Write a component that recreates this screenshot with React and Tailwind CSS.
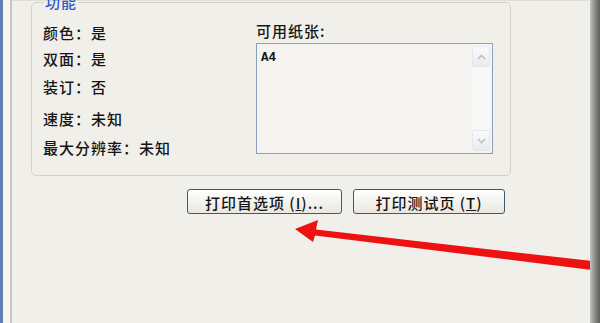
import React from "react";

const cjk = { fontFamily: '"Noto Sans CJK SC", "Noto Sans", sans-serif' };

function InfoRow({ label, value, h }) {
  return (
    <div className={`flex items-center ${h}`}>
      <span>{label}：</span>
      <span>{value}</span>
    </div>
  );
}

function ScrollBtn({ up }) {
  return (
    <div className="w-[18px] h-[21px] rounded-[2px] border border-[#e3e7ef] bg-gradient-to-b from-[#fbfbf9] to-[#e8ebee] flex items-center justify-center">
      <svg width="9" height="6" viewBox="0 0 9 6">
        <path
          d={up ? "M1 5 L4.5 1.5 L8 5" : "M1 1 L4.5 4.5 L8 1"}
          fill="none"
          stroke="#b9c0cc"
          strokeWidth="1.6"
        />
      </svg>
    </div>
  );
}

export default function App() {
  return (
    <div
      className="w-[600px] h-[323px] flex bg-[#f1efea] overflow-hidden text-[15px] tracking-[1px] font-medium text-[#151515]"
      style={cjk}
    >
      {/* window frame, left */}
      <div className="w-[3px] bg-[#5d7fb4]" />
      <div className="w-[7px] bg-[#f6f5f1]" />
      <div className="w-[2px] bg-[#c9c7bd]" />

      {/* tab page */}
      <div className="relative flex-1 pl-[19px] border-t border-[#e0ded6]">
        <fieldset className="w-[480px] h-[180px] -mt-[5px] border border-[#d3d0c4] rounded-[5px] px-[11px] pt-0 pb-0 flex">
          <legend className="px-[1px] ml-[1px] text-[#2659c9] leading-[12px] -mt-[7px]">功能</legend>

          <div className="w-[213px] pt-[12px]">
            <InfoRow label="颜色" value="是" h="h-[26px]" />
            <InfoRow label="双面" value="是" h="h-[26px]" />
            <InfoRow label="装订" value="否" h="h-[30px]" />
            <InfoRow label="速度" value="未知" h="h-[34px]" />
            <InfoRow label="最大分辨率" value="未知" h="h-[24px]" />
          </div>

          <div className="pt-[11px]">
            <div className="h-[24px] flex items-center">可用纸张:</div>
            <div className="w-[237px] h-[111px] border border-[#8aa0bd] bg-[#f5f4f1] flex justify-between p-[2px]">
              <span className="pl-[2px] pt-[5px] text-[12.5px] tracking-normal font-bold text-[#111] leading-[14px]" style={{ fontFamily: '"Liberation Mono", monospace' }}>
                A4
              </span>
              <div className="w-[18px] flex flex-col justify-between bg-[#f8f8f6]">
                <ScrollBtn up />
                <ScrollBtn />
              </div>
            </div>
          </div>
        </fieldset>

        <div className="flex gap-[11px] mt-[13px] ml-[156px]">
          <button className="w-[155px] h-[25px] rounded-[3px] border border-[#3d5878] bg-gradient-to-b from-[#ffffff] to-[#e9e7df] flex items-center justify-center leading-none pt-[1px]">
            打印首选项 (<u>I</u>)...
          </button>
          <button className="w-[152px] h-[25px] rounded-[3px] border border-[#3d5878] bg-gradient-to-b from-[#ffffff] to-[#e9e7df] flex items-center justify-center leading-none pt-[1px]">
            打印测试页 (<u>T</u>)
          </button>
        </div>

        {/* red annotation arrow */}
        <svg className="absolute left-0 top-0" width="578" height="323" viewBox="12 0 578 323">
          <polygon
            points="295,228 318,219 316,228.5 600,261 600,270 315,234.5 313,241"
            fill="#ee1111"
          />
        </svg>
      </div>

      {/* window frame, right */}
      <div className="w-[10px] bg-gradient-to-r from-[#c4c4c2] via-[#8a8a88] to-[#5e5e5c]" />
    </div>
  );
}
